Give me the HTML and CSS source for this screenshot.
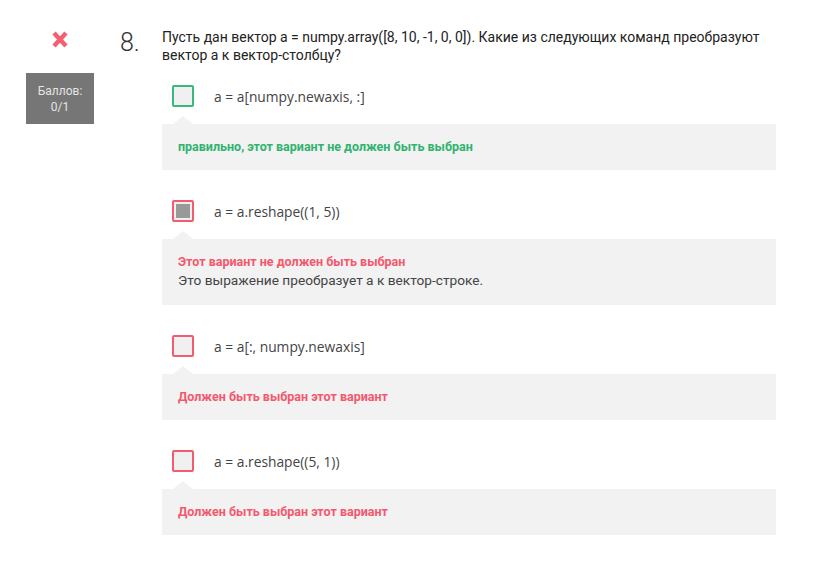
FILE: index.html
```html
<!DOCTYPE html>
<html lang="ru">
<head>
<meta charset="utf-8">
<link rel="stylesheet" href="styles.css">
</head>
<body>
<div class="question">
  <div class="status">
    <svg class="cross" width="18" height="17" viewBox="0 0 18 17">
      <path d="M3 2 L15 15 M15 2 L3 15" stroke="#f65e72" stroke-width="4.4" stroke-linecap="butt" fill="none"/>
    </svg>
    <div class="score">Баллов:<br>0/1</div>
  </div>
  <div class="num">8.</div>
  <div class="body">
    <p class="text">Пусть дан вектор a = numpy.array([8, 10, -1, 0, 0]). Какие из следующих команд преобразуют вектор a к вектор-столбцу?</p>
    <div class="option">
      <div class="choice"><span class="box box-ok"></span><span class="label">a = a[numpy.newaxis, :]</span></div>
      <div class="feedback"><div class="fb-title ok">правильно, этот вариант не должен быть выбран</div></div>
    </div>
    <div class="option">
      <div class="choice"><span class="box box-bad checked"></span><span class="label">a = a.reshape((1, 5))</span></div>
      <div class="feedback"><div class="fb-title bad">Этот вариант не должен быть выбран</div><div class="fb-text">Это выражение преобразует a к вектор-строке.</div></div>
    </div>
    <div class="option">
      <div class="choice"><span class="box box-bad"></span><span class="label">a = a[:, numpy.newaxis]</span></div>
      <div class="feedback"><div class="fb-title bad">Должен быть выбран этот вариант</div></div>
    </div>
    <div class="option">
      <div class="choice"><span class="box box-bad"></span><span class="label">a = a.reshape((5, 1))</span></div>
      <div class="feedback"><div class="fb-title bad">Должен быть выбран этот вариант</div></div>
    </div>
  </div>
</div>
</body>
</html>
```
FILE: styles.css
```css
html, body {
  margin: 0;
  padding: 0;
  background: #fff;
}
body {
  font-family: Roboto, "Liberation Sans", Arial, sans-serif;
  color: #333;
}
.question {
  display: flex;
  align-items: flex-start;
  padding: 28px 0 0 26px;
}
.status {
  width: 68px;
  display: flex;
  flex-direction: column;
  align-items: center;
}
.cross {
  display: block;
  margin-top: 3px;
}
.score {
  margin-top: 25px;
  width: 68px;
  box-sizing: border-box;
  padding: 10px 0 9px;
  background: #767676;
  color: #e4e4e4;
  font-size: 12px;
  line-height: 16px;
  text-align: center;
}
.num {
  width: 42px;
  margin-left: 26px;
  font-size: 25px;
  font-weight: 300;
  line-height: 29px;
  color: #333;
}
.body {
  width: 614px;
}
.text {
  margin: 0;
  font-size: 14px;
  line-height: 18px;
  color: #222;
}
.option {
  margin-top: 30px;
}
.option:first-of-type {
  margin-top: 21px;
}
.choice {
  display: flex;
  align-items: center;
  padding-left: 10px;
  height: 22px;
}
.box {
  width: 22px;
  height: 22px;
  box-sizing: border-box;
  border: 2px solid;
  border-radius: 2px;
  background: #f0f0f0;
  flex: none;
}
.box-ok { border-color: #3bb97b; }
.box-bad { border-color: #f35b6e; }
.box.checked {
  padding: 2px;
  background: #999 content-box;
  box-shadow: inset 0 0 0 2px #f0f0f0;
}
.label {
  margin-left: 20px;
  font-family: "Open Sans", Roboto, sans-serif;
  font-size: 13.8px;
  color: #444;
}
.feedback {
  position: relative;
  margin-top: 17px;
  background: #f2f2f2;
  padding: 15px 16px;
}
.feedback::before {
  content: "";
  position: absolute;
  top: -8px;
  left: 11px;
  border-left: 10px solid transparent;
  border-right: 10px solid transparent;
  border-bottom: 8px solid #f2f2f2;
}
.fb-title {
  font-size: 12.5px;
  font-weight: 700;
  line-height: 16px;
}
.ok { color: #30b36f; }
.bad { color: #f4586d; }
.fb-text {
  font-size: 13.7px;
  line-height: 20px;
  color: #444;
}
```
